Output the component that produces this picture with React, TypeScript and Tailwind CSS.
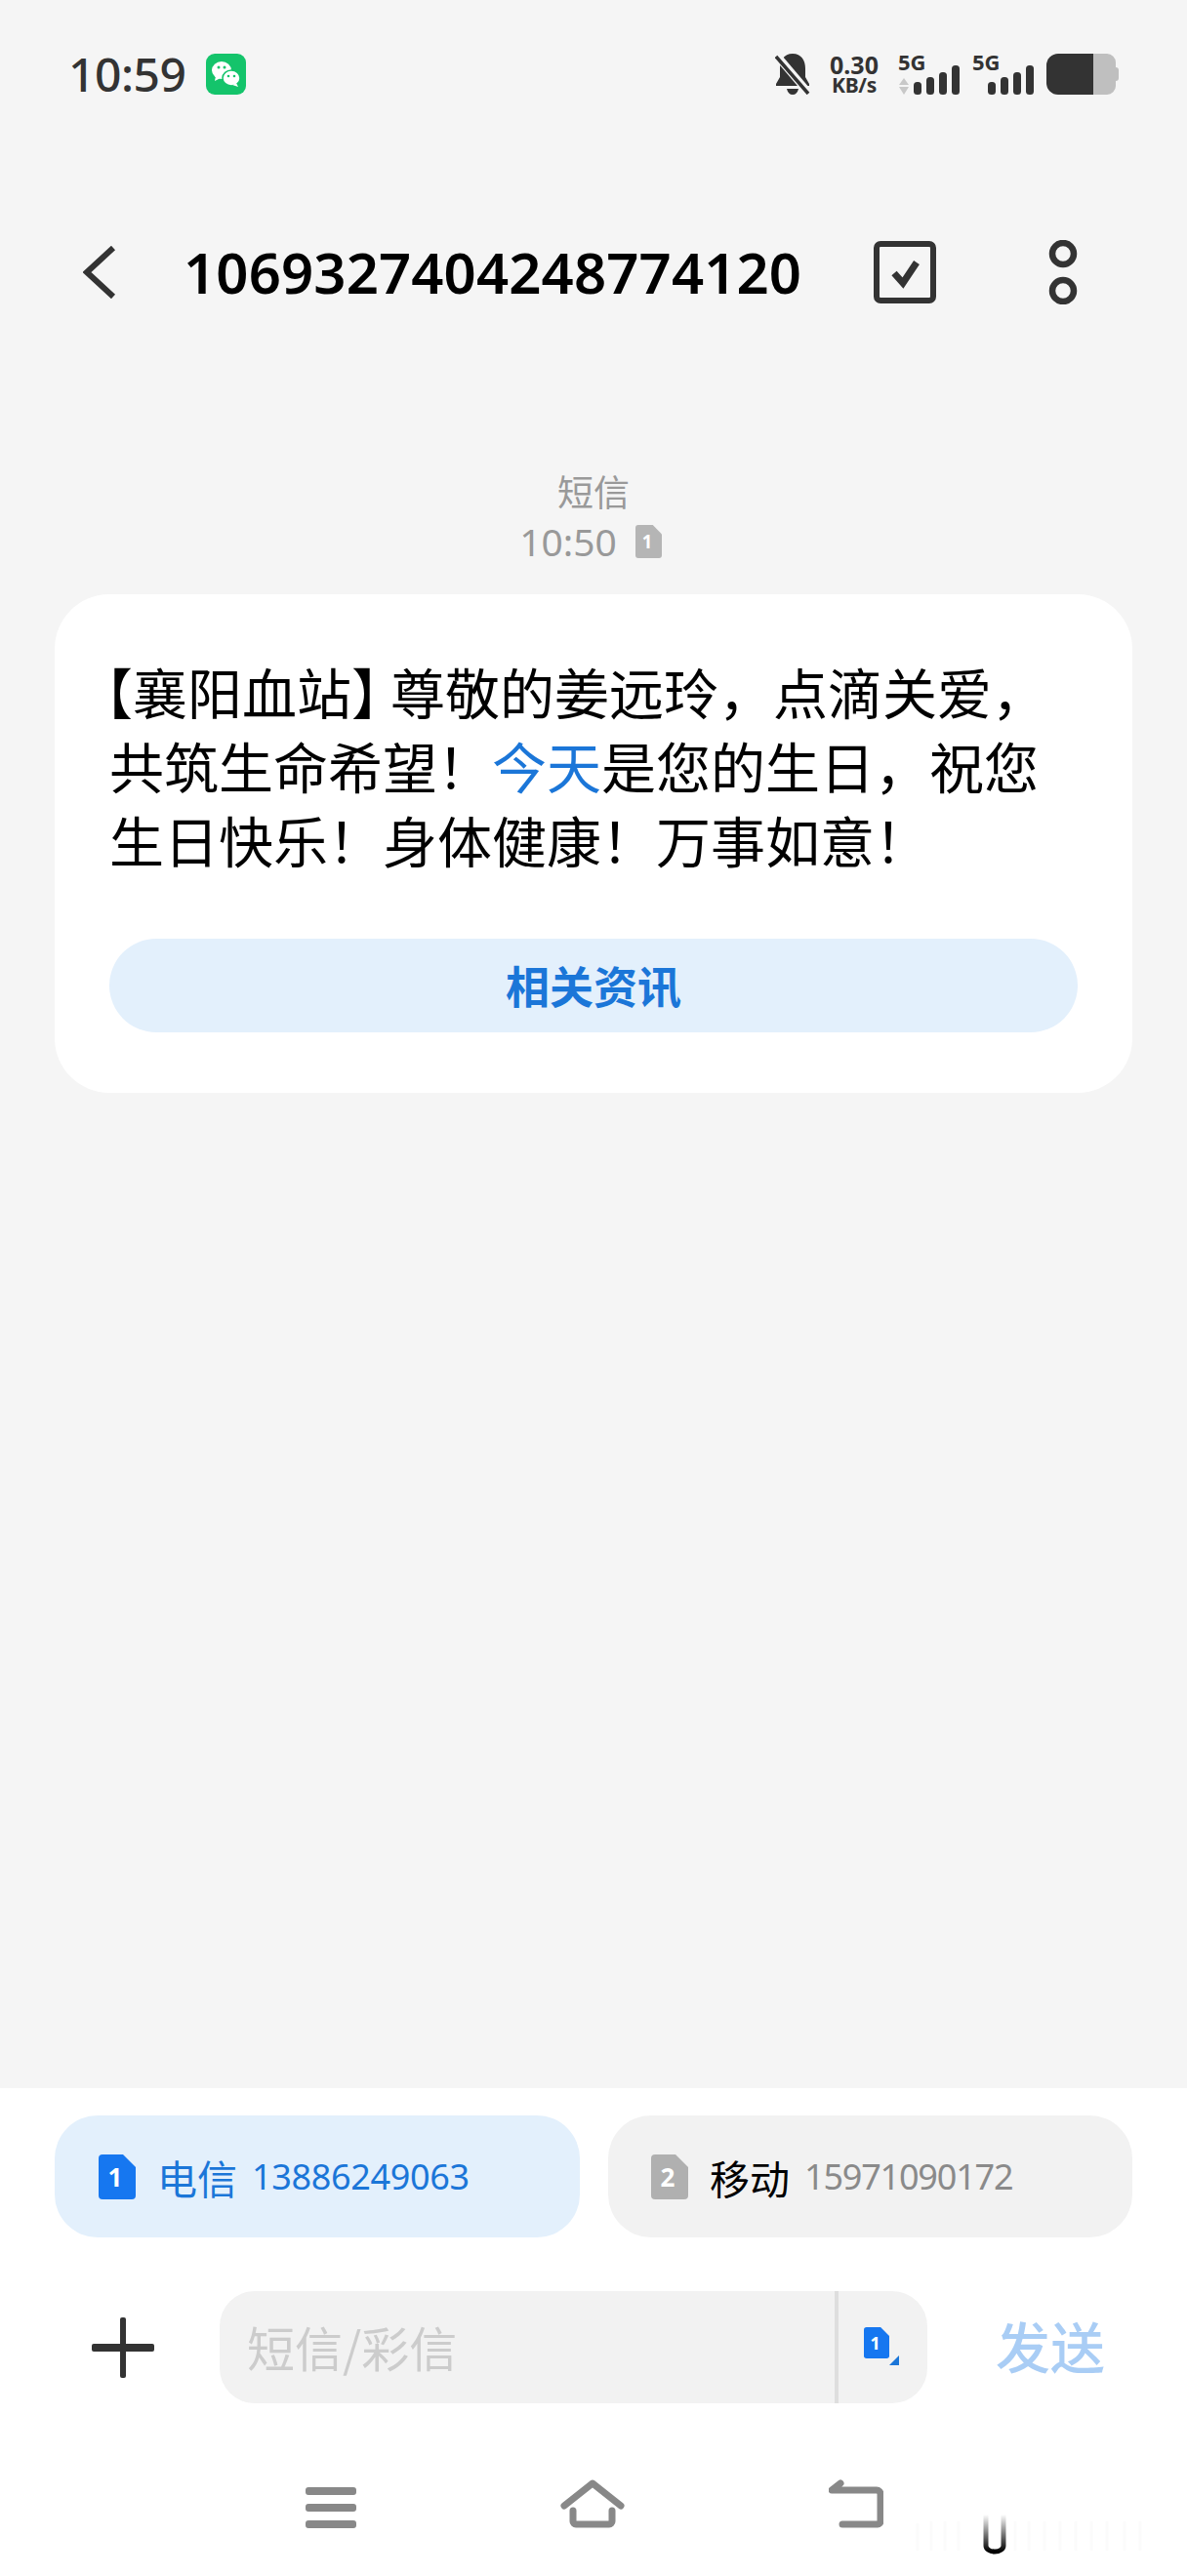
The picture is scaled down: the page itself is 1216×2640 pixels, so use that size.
import React from "react";

const cjk = "font-['Noto_Sans_CJK_SC','Noto_Sans',sans-serif]";

function Sim({ n, color, w, h }: { n: string; color: string; w: number; h: number }) {
  return (
    <svg width={w} height={h} viewBox="0 0 38 46" preserveAspectRatio="none" className="shrink-0">
      <path d="M4 0H25L38 13V42a4 4 0 0 1-4 4H4a4 4 0 0 1-4-4V4a4 4 0 0 1 4-4Z" fill={color} />
      <text x="17" y="33" textAnchor="middle" fontSize="26" fontWeight="700" fill="#fff" fontFamily="Noto Sans">{n}</text>
    </svg>
  );
}

function Wechat() {
  return (
    <svg width="41" height="42" viewBox="0 0 41 42" className="ml-[21px]">
      <rect width="41" height="42" rx="9" fill="#14c46b" />
      <ellipse cx="16" cy="17" rx="10" ry="9" fill="#fff" />
      <path d="M10 23l-1 5 6-3Z" fill="#fff" />
      <ellipse cx="26" cy="25" rx="9" ry="8" fill="#fff" stroke="#14c46b" strokeWidth="1.5" />
      <path d="M31 30l2 4-6-2Z" fill="#fff" />
      <circle cx="13" cy="14" r="1.5" fill="#14c46b" />
      <circle cx="19" cy="14" r="1.5" fill="#14c46b" />
      <circle cx="23" cy="23" r="1.3" fill="#14c46b" />
      <circle cx="29" cy="23" r="1.3" fill="#14c46b" />
    </svg>
  );
}

function Bell() {
  return (
    <svg width="36" height="42" viewBox="0 0 36 42">
      <path d="M18 0c9 0 13 7 13 15v9l4 7v2H1v-2l4-7V15C5 7 9 0 18 0Z" fill="#333" />
      <path d="M12 36h12c-1 4-3 6-6 6s-5-2-6-6Z" fill="#333" />
      <path d="M1 1 35 41" stroke="#f5f5f5" strokeWidth="8" />
      <path d="M1 3 34 41" stroke="#333" strokeWidth="3.5" />
    </svg>
  );
}

function Signal({ arrows }: { arrows?: boolean }) {
  return (
    <div className="relative w-[63px] h-[42px]">
      <span className="absolute left-0 top-[-4px] text-[22px] leading-[24px] font-bold text-[#333] font-['Noto_Sans',sans-serif]">5G</span>
      <svg width="63" height="42" viewBox="0 0 63 42" className="absolute left-0 top-0">
        {arrows && (
          <>
            <path d="M6 25l5 7H1Z" fill="#c8c8c8" />
            <path d="M1 34h10l-5 8Z" fill="#c8c8c8" />
          </>
        )}
        <rect x="16" y="29" width="8" height="13" rx="3.5" fill="#333" />
        <rect x="29" y="24" width="8" height="18" rx="3.5" fill="#333" />
        <rect x="42" y="19" width="8" height="23" rx="3.5" fill="#333" />
        <rect x="55" y="12" width="8" height="30" rx="3.5" fill="#333" />
      </svg>
    </div>
  );
}

function Battery() {
  return (
    <svg width="74" height="42" viewBox="0 0 74 42">
      <path d="M48 0H62a9 9 0 0 1 9 9v5a3 3 0 0 1 3 3v8a3 3 0 0 1-3 3v5a9 9 0 0 1-9 9H48Z" fill="#bfbfbf" />
      <path d="M12 0H48V42H12A12 12 0 0 1 0 30V12A12 12 0 0 1 12 0Z" fill="#333" />
    </svg>
  );
}

export default function App() {
  return (
    <div className={`w-[1216px] h-[2640px] bg-[#f5f5f5] flex flex-col ${cjk}`}>
      {/* status bar */}
      <div className="flex items-center justify-between h-[42px] mt-[55px] pl-[70px] pr-[70px]">
        <div className="flex items-center">
          <span className="text-[48px] leading-[42px] font-medium text-[#333] font-['Noto_Sans',sans-serif] tracking-[-0.5px]">10:59</span>
          <Wechat />
        </div>
        <div className="flex items-center">
          <Bell />
          <div className="ml-[17px] w-[56px] flex flex-col items-center font-['Noto_Sans',sans-serif] font-bold text-[#333] leading-none">
            <span className="text-[25px] h-[22px] leading-[22px]">0.30</span>
            <span className="text-[21px] h-[20px] leading-[20px] tracking-[-0.3px]">KB/s</span>
          </div>
          <div className="ml-[17px]"><Signal arrows /></div>
          <div className="ml-[13px]"><Signal /></div>
          <div className="ml-[13px]"><Battery /></div>
        </div>
      </div>

      {/* header */}
      <div className="flex items-center h-[66px] mt-[149px] pl-[85px]">
        <svg width="34" height="54" viewBox="0 0 34 54" className="shrink-0">
          <path d="M31 2 4 27l27 25" fill="none" stroke="#333" strokeWidth="6" />
        </svg>
        <span className="ml-[69px] w-[707px] text-[58px] leading-[66px] font-semibold text-black font-['Noto_Sans',sans-serif] tracking-[0.15px]">1069327404248774120</span>
        <svg width="64" height="64" viewBox="0 0 64 64" className="shrink-0">
          <rect x="3" y="3" width="58" height="58" rx="4" fill="none" stroke="#333" strokeWidth="6" />
          <path d="M21 33l9 10 14-21" fill="none" stroke="#333" strokeWidth="7" />
        </svg>
        <svg width="30" height="66" viewBox="0 0 30 66" className="ml-[115px] shrink-0">
          <circle cx="15" cy="14" r="11" fill="none" stroke="#333" strokeWidth="6.5" />
          <circle cx="15" cy="52" r="11" fill="none" stroke="#333" strokeWidth="6.5" />
        </svg>
      </div>

      {/* thread */}
      <div className="flex-1 px-[56px] flex flex-col items-center">
        <div className="mt-[167px] text-[37px] leading-[48px] text-[#999]">短信</div>
        <div className="flex items-center h-[50px] mt-[3px] gap-[19px] -translate-x-[3px]">
          <span className="text-[39px] leading-[50px] text-[#999] font-['Noto_Sans',sans-serif]">10:50</span>
          <Sim n="1" color="#b5b5b5" w={27} h={34} />
        </div>
        <div className="w-full mt-[29px] h-[511px] bg-white rounded-[56px] px-[56px] pt-[61px]">
          <div className="text-[56px] leading-[76px] text-black whitespace-nowrap">
            <div>
              <span className="[font-feature-settings:'halt'] ml-[-4px]">【</span>襄阳血站<span className="[font-feature-settings:'halt'] mr-[12px]">】</span>尊敬的姜远玲，点滴关爱，
            </div>
            <div>
              共筑生命希望！<span className="text-[#1b76d8]">今天</span>是您的生日，祝您
            </div>
            <div>生日快乐！身体健康！万事如意！</div>
          </div>
          <div className="mt-[64px] h-[96px] rounded-full bg-[#e3f0fc] flex items-center justify-center text-[45px] font-bold text-[#1b76d8]">
            相关资讯
          </div>
        </div>
      </div>

      {/* composer */}
      <div className="h-[500px] bg-white relative">
        <div className="flex gap-[29px] px-[56px] pt-[28px]">
          <div className="flex-1 h-[125px] rounded-[44px] bg-[#e3f0fc] flex items-center pl-[45px]">
            <Sim n="1" color="#1677f0" w={38} h={46} />
            <span className="ml-[22px] text-[41px] leading-[50px] text-[#1b76d8]">电信</span>
            <span className="ml-[15px] text-[36px] leading-[50px] text-[#1b76d8] font-['Noto_Sans',sans-serif] tracking-[-0.35px]">13886249063</span>
          </div>
          <div className="flex-1 h-[125px] rounded-[44px] bg-[#f2f2f2] flex items-center pl-[44px]">
            <Sim n="2" color="#b0b0b0" w={38} h={46} />
            <span className="ml-[22px] text-[41px] leading-[50px] text-black">移动</span>
            <span className="ml-[15px] text-[36px] leading-[50px] text-[#8a8a8a] font-['Noto_Sans',sans-serif] tracking-[-1.2px]">15971090172</span>
          </div>
        </div>

        <div className="flex items-center mt-[55px] pl-[94px]">
          <svg width="64" height="64" viewBox="0 0 64 64" className="shrink-0">
            <rect x="0" y="28" width="64" height="8" rx="2" fill="#333" />
            <rect x="29" y="1" width="6" height="62" rx="2" fill="#333" />
          </svg>
          <div className="ml-[67px] w-[725px] h-[115px] rounded-[36px] bg-[#f2f2f2] flex items-center">
            <span className="w-[630px] pl-[28px] text-[49px] leading-[60px] text-[#cccccc] -mt-[2px]">短信/彩信</span>
            <div className="w-[4px] h-full bg-[#dedede]" />
            <div className="relative ml-[26px] w-[36px] h-[39px] -mt-[3px]">
              <Sim n="1" color="#1677f0" w={26} h={32} />
              <svg width="10" height="10" viewBox="0 0 10 10" className="absolute right-0 bottom-0">
                <path d="M10 0V10H0Z" fill="#1b76d8" />
              </svg>
            </div>
          </div>
          <span className="ml-[70px] text-[56px] leading-[60px] text-[#a9cdf5] font-medium -mt-[6px]">发送</span>
        </div>

        <div className="flex items-end h-[50px] mt-[78px] pl-[313px] gap-[209px]">
          <svg width="52" height="42" viewBox="0 0 52 42" className="shrink-0">
            <rect y="0" width="52" height="8" rx="3" fill="#888" />
            <rect y="17" width="52" height="8" rx="3" fill="#888" />
            <rect y="34" width="52" height="8" rx="3" fill="#888" />
          </svg>
          <svg width="66" height="50" viewBox="0 0 66 50" className="shrink-0">
            <path d="M4 27 33 4l29 23" fill="none" stroke="#888" strokeWidth="7" strokeLinecap="round" strokeLinejoin="round" />
            <path d="M13 32v11a3 3 0 0 0 3 3h34a3 3 0 0 0 3-3V32" fill="none" stroke="#888" strokeWidth="7" strokeLinecap="round" />
          </svg>
          <svg width="56" height="50" viewBox="0 0 56 50" className="shrink-0">
            <path d="M12 4 3 11h46a4 4 0 0 1 4 4v28a3 3 0 0 1-3 3H14" fill="none" stroke="#888" strokeWidth="7" strokeLinecap="round" strokeLinejoin="round" />
          </svg>
        </div>

        {/* ghost watermark over the corner */}
        <svg width="270" height="44" viewBox="0 0 270 44" className="absolute left-[920px] top-[434px]">
          <defs>
            <linearGradient id="u" x1="0" y1="0" x2="0" y2="1">
              <stop offset="0" stopColor="#fff" />
              <stop offset="1" stopColor="#000" />
            </linearGradient>
          </defs>
          <g stroke="#fbfbfb" strokeWidth="3">
            <path d="M20 12v28M34 10v30M48 10v30M62 10v30M120 10v30M134 10v30M150 10v30M166 10v30M182 10v30M198 10v30M214 10v30M232 10v30M248 10v30" />
          </g>
          <path d="M90 3v32a9 6 0 0 0 18 0V3" fill="none" stroke="url(#u)" strokeWidth="5" />
        </svg>
      </div>
    </div>
  );
}
